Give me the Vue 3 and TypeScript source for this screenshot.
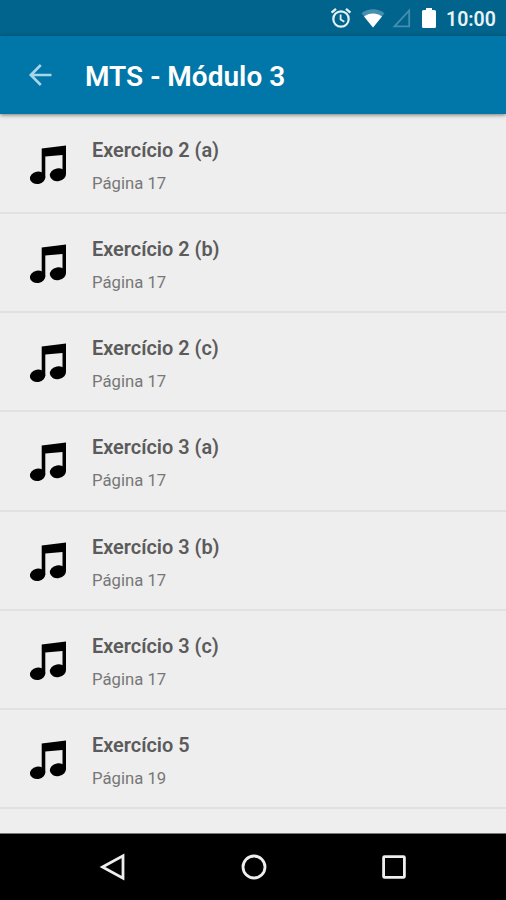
<script setup lang="ts">
interface Exercise {
  title: string
  page: number
}

const exercises: Exercise[] = [
  { title: 'Exercício 2 (a)', page: 17 },
  { title: 'Exercício 2 (b)', page: 17 },
  { title: 'Exercício 2 (c)', page: 17 },
  { title: 'Exercício 3 (a)', page: 17 },
  { title: 'Exercício 3 (b)', page: 17 },
  { title: 'Exercício 3 (c)', page: 17 },
  { title: 'Exercício 5', page: 19 },
]
</script>

<template>
  <div class="screen">
    <div class="status-bar">
      <svg class="alarm" width="22" height="22" viewBox="0 0 22 22" fill="none" stroke="#e4f1f7">
        <circle cx="11" cy="12" r="7.7" stroke-width="2.2" />
        <path d="M1.6 5.6 6 1.9M20.4 5.6 16 1.9" stroke-width="2.4" />
        <path d="M10.6 7.6v4.9l3.7 2.3" stroke-width="1.8" />
      </svg>
      <svg class="wifi" width="26" height="22" viewBox="0 0 26 22">
        <path d="M1.500 6.200C8 .9 18 .9 24.500 6.200L13 20.500z" fill="#4590b0" />
        <path d="M4 9.600c5-4.200 13-4.200 18 0L13 20.500z" fill="#fff" />
      </svg>
      <svg class="signal" width="20" height="20" viewBox="0 0 20 20">
        <path d="M2.500 18.300H17.200V2.500z" fill="none" stroke="#468eaf" stroke-width="1.800" />
      </svg>
      <svg class="battery" width="14" height="22" viewBox="0 0 14 22">
        <path d="M4 1h6v2h2.500q1.500 0 1.500 1.500V19.500q0 1.500-1.500 1.500h-11Q0 21 0 19.500V4.500Q0 3 1.500 3H4z" fill="#fff" />
      </svg>
      <span class="clock">10:00</span>
    </div>

    <header class="app-bar">
      <svg class="back" width="26" height="26" viewBox="0 0 26 26" fill="none" stroke="#a9d5e8" stroke-width="2.600">
        <path d="M24.500 13H3.800M13.800 3 3.800 13 13.800 23" />
      </svg>
      <h1 class="title">MTS - Módulo 3</h1>
    </header>

    <main class="list">
      <article v-for="item in exercises" :key="item.title" class="row">
        <svg class="note" width="40" height="44" viewBox="0 0 40 44">
          <path d="M13.700 5.400 38 2.400V31.500H34.500V11.900L17.300 13.600V35H13.700z" />
          <ellipse cx="9.600" cy="34.800" rx="7.700" ry="6.200" transform="rotate(-10 9.600 34.800)" />
          <ellipse cx="29.900" cy="31.700" rx="8.100" ry="6.400" transform="rotate(-10 29.900 31.700)" />
        </svg>
        <div class="labels">
          <div class="name">{{ item.title }}</div>
          <div class="page">Página {{ item.page }}</div>
        </div>
      </article>
    </main>

    <nav class="nav-bar">
      <svg width="28" height="28" viewBox="0 0 28 28">
        <path d="M3.500 14 24 2.800V25.200z" />
      </svg>
      <svg width="28" height="28" viewBox="0 0 28 28">
        <circle cx="14" cy="14" r="11" />
      </svg>
      <svg width="28" height="28" viewBox="0 0 28 28">
        <rect x="3.600" y="3.600" width="20.800" height="20.800" rx="1" />
      </svg>
    </nav>
  </div>
</template>

<style>
body {
  margin: 0;
}
</style>

<style scoped>
.screen {
  display: flex;
  flex-direction: column;
  width: 506px;
  height: 900px;
  overflow: hidden;
  background: #eee;
  font-family: Roboto, "Liberation Sans", sans-serif;
}

svg {
  display: block;
  flex: none;
}

.status-bar {
  display: flex;
  flex: none;
  align-items: center;
  box-sizing: border-box;
  height: 36px;
  padding-left: 330px;
  background: #00648c;
}

.wifi {
  margin-left: 8px;
}

.signal {
  margin-left: 6px;
}

.battery {
  margin-left: 10px;
}

.clock {
  margin-left: 10px;
  margin-top: 3px;
  color: #e9f4f8;
  font-size: 19.500px;
  font-weight: 600;
  line-height: 24px;
}

.app-bar {
  display: flex;
  flex: none;
  align-items: center;
  z-index: 1;
  height: 78px;
  padding-left: 27px;
  background: #0077a8;
  box-shadow: 0 1px 4px rgba(0, 0, 0, 0.5);
}

.title {
  margin: 3px 0 0 32px;
  color: #fff;
  font-size: 28px;
  font-weight: 600;
  line-height: 34px;
}

.list {
  flex: 1;
  min-height: 0;
  padding-top: 1px;
  overflow: hidden;
}

.row {
  display: flex;
  box-sizing: border-box;
  height: 99.170px;
  padding: 22px 0 0 28px;
  border-bottom: 2px solid #e1e1e1;
}

.note {
  margin-top: 6px;
  fill: #000;
}

.labels {
  margin-left: 24px;
}

.name {
  color: #5b5b5b;
  font-size: 19.900px;
  font-weight: 600;
  line-height: 28px;
}

.page {
  margin-top: 6px;
  color: #777;
  font-size: 16.700px;
  line-height: 26px;
}

.nav-bar {
  display: flex;
  flex: none;
  align-items: center;
  justify-content: center;
  gap: 112.500px;
  height: 66px;
  padding-left: 1px;
  border-top: 1px solid #777;
  background: #000;
}

.nav-bar svg {
  fill: none;
  stroke: #eee;
  stroke-width: 2.800;
}
</style>
